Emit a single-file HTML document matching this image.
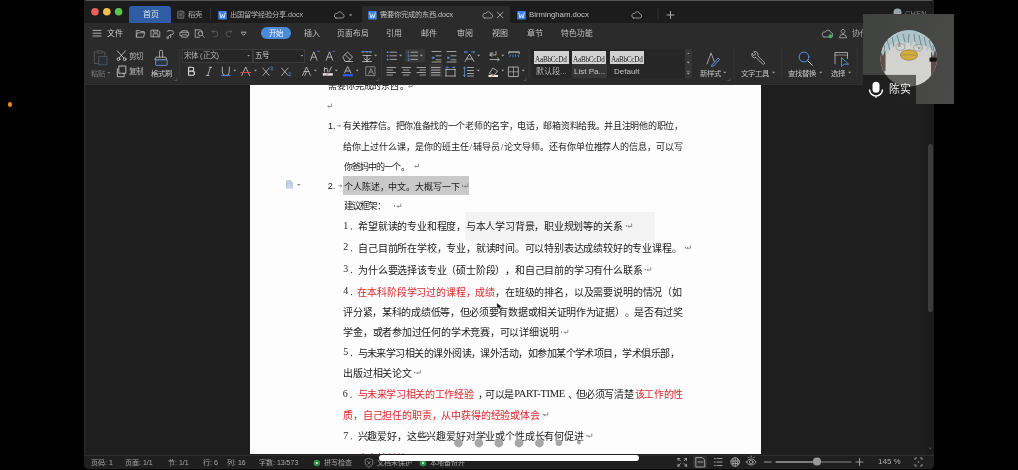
<!DOCTYPE html>
<html lang="zh-CN">
<head>
<meta charset="utf-8">
<style>
*{margin:0;padding:0;box-sizing:border-box}
html,body{width:1018px;height:470px;overflow:hidden;background:#000}
body{position:relative;font-family:"Liberation Sans",sans-serif}
.gs{will-change:transform}
.a{position:absolute}
.tx{position:absolute;white-space:nowrap;font-size:8px;line-height:10px;color:#c2c2c2;will-change:transform}
.ln{position:absolute;left:0;width:1018px}
.ln i{position:absolute;top:0;font-style:normal;font-family:"Liberation Serif",serif;display:block;width:1em;text-align:center}
.num{position:absolute;font-family:"Liberation Sans",sans-serif;font-size:9px;line-height:10px;color:#1a1a1a}
.num2{position:absolute;font-family:"Liberation Serif",serif;font-size:10px;line-height:12px;color:#2a2a2a}
.hl{position:absolute;background:#c9c9c9}
.lat{position:absolute;font-family:"Liberation Serif",serif;font-size:10.5px;line-height:12px;color:#1a1a1a;letter-spacing:-0.3px}
svg{position:absolute;left:0;top:0}
</style>
</head>
<body>
<!-- orange dot -->
<div class="a" style="left:7.8px;top:102.2px;width:4.2px;height:4.4px;border-radius:50%;background:#e38c10"></div>

<!-- window -->
<div class="a" style="left:84px;top:0;width:850px;height:469px;border-radius:3px 3px 5px 5px;background:#1e1e1e;overflow:hidden;box-shadow:inset 1px 0 0 #2e2e2e, inset -1px 0 0 #2e2e2e">
  <div class="a" style="left:0;top:0;width:850px;height:23px;background:#1c1c1c;border-top:1px solid #555"></div>
  <div class="a" style="left:0;top:23px;width:850px;height:61px;background:#2b2b2b"></div>
  <div class="a" style="left:0;top:83.6px;width:850px;height:1.2px;background:#313131"></div>
  <div class="a" style="left:0;top:454.5px;width:850px;height:15px;background:#1f1f1f;border-top:1px solid #2e2e2e"></div>
</div>

<!-- tabs -->
<div class="a" style="left:129px;top:6px;width:42px;height:17px;background:#2f5ca3;border-radius:3px 3px 0 0"></div>
<div class="tx" style="left:142.5px;top:9.5px;color:#dfe6f2">首页</div>
<div class="a" style="left:362px;top:6px;width:148px;height:17px;background:#2b2b2b;border-radius:3px 3px 0 0"></div>
<div class="tx" style="left:188px;top:9.8px;color:#b0b0b0;font-size:7.3px">稻壳</div>
<div class="tx" style="left:230.2px;top:9.8px;color:#b8b8b8;font-size:7.2px">出国留学经验分享.docx</div>
<div class="tx" style="left:379.5px;top:9.8px;color:#c0c0c0;font-size:7.2px">需要你完成的东西.docx</div>
<div class="tx" style="left:529px;top:9.8px;color:#c4c4c4;font-size:7.75px">Birmingham.docx</div>
<div class="tx" style="left:905px;top:8.5px;color:#808080;font-size:7.3px;letter-spacing:0.3px">CHEN</div>

<!-- menu row -->
<div class="tx" style="left:106.5px;top:28.5px;color:#c8c8c8">文件</div>
<div class="a" style="left:261.4px;top:27.4px;width:29.4px;height:11.6px;border-radius:5.8px;background:#4c89d6"></div>
<div class="tx" style="left:268.8px;top:28.6px;color:#f4f7fc;font-size:7.5px">开始</div>
<div class="tx" style="left:304px;top:28.5px">插入</div>
<div class="tx" style="left:337.3px;top:28.5px;font-size:7.7px">页面布局</div>
<div class="tx" style="left:385.5px;top:28.5px">引用</div>
<div class="tx" style="left:420.5px;top:28.5px">邮件</div>
<div class="tx" style="left:456.5px;top:28.5px">审阅</div>
<div class="tx" style="left:492px;top:28.5px">视图</div>
<div class="tx" style="left:527.3px;top:28.5px">章节</div>
<div class="tx" style="left:560.7px;top:28.5px;font-size:7.7px">特色功能</div>
<div class="tx" style="left:851.5px;top:28.5px;color:#a8a8a8">协作</div>

<!-- ribbon text -->
<div class="tx" style="left:90.5px;top:68.5px;color:#7c7c7c;font-size:7.4px">粘贴</div>
<div class="tx" style="left:128.8px;top:52px;color:#b4b4b4;font-size:7.5px">剪切</div>
<div class="tx" style="left:128.8px;top:67px;color:#b4b4b4;font-size:7.5px">复制</div>
<div class="tx" style="left:150.5px;top:68.5px;color:#c4c4c4;font-size:7.4px">格式刷</div>
<div class="a" style="left:182.2px;top:49.3px;width:71px;height:13.3px;border:1px solid #3c3c3c;background:#262626"></div>
<div class="a" style="left:253.3px;top:49.3px;width:52px;height:13.3px;border:1px solid #3c3c3c;background:#262626"></div>
<div class="tx" style="left:183.5px;top:51.2px;color:#b0b0b0;font-size:7.5px">宋体 (正文)</div>
<div class="tx" style="left:255.3px;top:51.2px;color:#d0d0d0;font-size:7.5px">五号</div>
<div class="a" style="left:532px;top:49px;width:153px;height:28.6px;background:#262626"></div>
<div class="a" style="left:684.5px;top:49px;width:7.5px;height:28.6px;background:#363636"></div>
<div class="a" style="left:571.8px;top:64px;width:35.2px;height:13.6px;background:#363636"></div>
<div class="a" style="left:534px;top:50.9px;width:34.8px;height:12.8px;background:#d2d2d2"></div>
<div class="a" style="left:572px;top:50.9px;width:34px;height:12.8px;background:#d2d2d2"></div>
<div class="a" style="left:610px;top:50.9px;width:34px;height:12.8px;background:#d2d2d2"></div>
<div class="tx" style="left:535px;top:54.5px;font-size:7.2px;color:#1a1a1a;letter-spacing:-0.25px;font-family:'Liberation Serif',serif">AaBbCcDd</div>
<div class="tx" style="left:573px;top:54.5px;font-size:7.2px;color:#1a1a1a;letter-spacing:-0.25px;font-family:'Liberation Serif',serif">AaBbCcDd</div>
<div class="tx" style="left:611px;top:54.5px;font-size:7.2px;color:#1a1a1a;letter-spacing:-0.25px;font-family:'Liberation Serif',serif">AaBbCcDd</div>
<div class="tx" style="left:536px;top:66.5px;color:#b4b4b4">默认段...</div>
<div class="tx" style="left:573.5px;top:66.5px;color:#c4c4c4">List Pa...</div>
<div class="tx" style="left:613.5px;top:66.5px;color:#c4c4c4">Default</div>
<div class="tx" style="left:699.5px;top:68.5px;color:#c4c4c4;font-size:7.4px">新样式</div>
<div class="tx" style="left:740.5px;top:68.5px;color:#c4c4c4;font-size:7.4px">文字工具</div>
<div class="tx" style="left:788px;top:68.5px;color:#c4c4c4;font-size:7.4px">查找替换</div>
<div class="tx" style="left:830.8px;top:68.5px;color:#c4c4c4;font-size:7.4px">选择</div>

<!-- page -->
<div class="a" style="left:250px;top:84.8px;width:511px;height:369.7px;background:#fdfdfd;overflow:hidden">
 <div class="a" style="left:215px;top:127.2px;width:190px;height:29px;background:#f3f3f3"></div>
 <div class="a gs" style="left:-250px;top:-84.8px;width:1018px;height:470px">
<div class="ln" style="top:82.00px;font-size:9px;height:9px;line-height:9px"><i style="left:328.30px;width:9.00px;color:#1a1a1a">需</i><i style="left:337.11px;width:9.00px;color:#1a1a1a">要</i><i style="left:345.93px;width:9.00px;color:#1a1a1a">你</i><i style="left:354.74px;width:9.00px;color:#1a1a1a">完</i><i style="left:363.56px;width:9.00px;color:#1a1a1a">成</i><i style="left:372.37px;width:9.00px;color:#1a1a1a">的</i><i style="left:381.19px;width:9.00px;color:#1a1a1a">东</i><i style="left:390.00px;width:9.00px;color:#1a1a1a">西</i></div>
<div class="ln" style="top:82.00px;font-size:9px;height:9px;line-height:9px"><i style="left:400.00px;width:9.00px;color:#1a1a1a">。</i></div>
<div class="num" style="left:327.9px;top:120.5px">1.</div>
<div class="ln" style="top:122.30px;font-size:9px;height:9px;line-height:9px"><i style="left:343.30px;width:9.00px;color:#1a1a1a">有</i><i style="left:352.00px;width:9.00px;color:#1a1a1a">关</i><i style="left:360.71px;width:9.00px;color:#1a1a1a">推</i><i style="left:369.41px;width:9.00px;color:#1a1a1a">荐</i><i style="left:378.11px;width:9.00px;color:#1a1a1a">信</i><i style="left:386.81px;width:9.00px;color:#1a1a1a">。</i><i style="left:395.52px;width:9.00px;color:#1a1a1a">把</i><i style="left:404.22px;width:9.00px;color:#1a1a1a">你</i><i style="left:412.92px;width:9.00px;color:#1a1a1a">准</i><i style="left:421.62px;width:9.00px;color:#1a1a1a">备</i><i style="left:430.33px;width:9.00px;color:#1a1a1a">找</i><i style="left:439.03px;width:9.00px;color:#1a1a1a">的</i><i style="left:447.73px;width:9.00px;color:#1a1a1a">一</i><i style="left:456.43px;width:9.00px;color:#1a1a1a">个</i><i style="left:465.14px;width:9.00px;color:#1a1a1a">老</i><i style="left:473.84px;width:9.00px;color:#1a1a1a">师</i><i style="left:482.54px;width:9.00px;color:#1a1a1a">的</i><i style="left:491.24px;width:9.00px;color:#1a1a1a">名</i><i style="left:499.95px;width:9.00px;color:#1a1a1a">字</i><i style="left:508.65px;width:9.00px;color:#1a1a1a">，</i><i style="left:517.35px;width:9.00px;color:#1a1a1a">电</i><i style="left:526.06px;width:9.00px;color:#1a1a1a">话</i><i style="left:534.76px;width:9.00px;color:#1a1a1a">，</i><i style="left:543.46px;width:9.00px;color:#1a1a1a">邮</i><i style="left:552.16px;width:9.00px;color:#1a1a1a">箱</i><i style="left:560.87px;width:9.00px;color:#1a1a1a">资</i><i style="left:569.57px;width:9.00px;color:#1a1a1a">料</i><i style="left:578.27px;width:9.00px;color:#1a1a1a">给</i><i style="left:586.97px;width:9.00px;color:#1a1a1a">我</i><i style="left:595.68px;width:9.00px;color:#1a1a1a">。</i><i style="left:604.38px;width:9.00px;color:#1a1a1a">并</i><i style="left:613.08px;width:9.00px;color:#1a1a1a">且</i><i style="left:621.78px;width:9.00px;color:#1a1a1a">注</i><i style="left:630.49px;width:9.00px;color:#1a1a1a">明</i><i style="left:639.19px;width:9.00px;color:#1a1a1a">他</i><i style="left:647.89px;width:9.00px;color:#1a1a1a">的</i><i style="left:656.59px;width:9.00px;color:#1a1a1a">职</i><i style="left:665.30px;width:9.00px;color:#1a1a1a">位</i><i style="left:674.00px;width:9.00px;color:#1a1a1a">，</i></div>
<div class="ln" style="top:143.00px;font-size:9px;height:9px;line-height:9px"><i style="left:343.30px;width:9.00px;color:#1a1a1a">给</i><i style="left:352.24px;width:9.00px;color:#1a1a1a">你</i><i style="left:361.18px;width:9.00px;color:#1a1a1a">上</i><i style="left:370.12px;width:9.00px;color:#1a1a1a">过</i><i style="left:379.06px;width:9.00px;color:#1a1a1a">什</i><i style="left:388.00px;width:9.00px;color:#1a1a1a">么</i><i style="left:396.94px;width:9.00px;color:#1a1a1a">课</i><i style="left:405.88px;width:9.00px;color:#1a1a1a">，</i><i style="left:414.82px;width:9.00px;color:#1a1a1a">是</i><i style="left:423.76px;width:9.00px;color:#1a1a1a">你</i><i style="left:432.69px;width:9.00px;color:#1a1a1a">的</i><i style="left:441.63px;width:9.00px;color:#1a1a1a">班</i><i style="left:450.57px;width:9.00px;color:#1a1a1a">主</i><i style="left:459.51px;width:9.00px;color:#1a1a1a">任</i><i style="left:468.45px;width:4.50px;color:#1a1a1a">/</i><i style="left:472.89px;width:9.00px;color:#1a1a1a">辅</i><i style="left:481.83px;width:9.00px;color:#1a1a1a">导</i><i style="left:490.77px;width:9.00px;color:#1a1a1a">员</i><i style="left:499.71px;width:4.50px;color:#1a1a1a">/</i><i style="left:504.15px;width:9.00px;color:#1a1a1a">论</i><i style="left:513.09px;width:9.00px;color:#1a1a1a">文</i><i style="left:522.03px;width:9.00px;color:#1a1a1a">导</i><i style="left:530.97px;width:9.00px;color:#1a1a1a">师</i><i style="left:539.91px;width:9.00px;color:#1a1a1a">。</i><i style="left:548.85px;width:9.00px;color:#1a1a1a">还</i><i style="left:557.79px;width:9.00px;color:#1a1a1a">有</i><i style="left:566.73px;width:9.00px;color:#1a1a1a">你</i><i style="left:575.67px;width:9.00px;color:#1a1a1a">单</i><i style="left:584.61px;width:9.00px;color:#1a1a1a">位</i><i style="left:593.54px;width:9.00px;color:#1a1a1a">推</i><i style="left:602.48px;width:9.00px;color:#1a1a1a">荐</i><i style="left:611.42px;width:9.00px;color:#1a1a1a">人</i><i style="left:620.36px;width:9.00px;color:#1a1a1a">的</i><i style="left:629.30px;width:9.00px;color:#1a1a1a">信</i><i style="left:638.24px;width:9.00px;color:#1a1a1a">息</i><i style="left:647.18px;width:9.00px;color:#1a1a1a">，</i><i style="left:656.12px;width:9.00px;color:#1a1a1a">可</i><i style="left:665.06px;width:9.00px;color:#1a1a1a">以</i><i style="left:674.00px;width:9.00px;color:#1a1a1a">写</i></div>
<div class="ln" style="top:162.50px;font-size:9px;height:9px;line-height:9px"><i style="left:343.60px;width:9.00px;color:#1a1a1a">你</i><i style="left:351.74px;width:9.00px;color:#1a1a1a">爸</i><i style="left:359.89px;width:9.00px;color:#1a1a1a">妈</i><i style="left:368.03px;width:9.00px;color:#1a1a1a">中</i><i style="left:376.17px;width:9.00px;color:#1a1a1a">的</i><i style="left:384.31px;width:9.00px;color:#1a1a1a">一</i><i style="left:392.46px;width:9.00px;color:#1a1a1a">个</i><i style="left:400.60px;width:9.00px;color:#1a1a1a">。</i></div>
<div class="hl" style="left:343.3px;top:175.6px;width:126px;height:19.6px"></div>
<div class="num" style="left:327.8px;top:180.5px">2.</div>
<div class="ln" style="top:182.50px;font-size:9px;height:9px;line-height:9px"><i style="left:344.00px;width:9.00px;color:#1a1a1a">个</i><i style="left:352.89px;width:9.00px;color:#1a1a1a">人</i><i style="left:361.78px;width:9.00px;color:#1a1a1a">陈</i><i style="left:370.67px;width:9.00px;color:#1a1a1a">述</i><i style="left:379.57px;width:9.00px;color:#1a1a1a">，</i><i style="left:388.46px;width:9.00px;color:#1a1a1a">中</i><i style="left:397.35px;width:9.00px;color:#1a1a1a">文</i><i style="left:406.24px;width:9.00px;color:#1a1a1a">。</i><i style="left:415.13px;width:9.00px;color:#1a1a1a">大</i><i style="left:424.02px;width:9.00px;color:#1a1a1a">概</i><i style="left:432.92px;width:9.00px;color:#1a1a1a">写</i><i style="left:441.81px;width:9.00px;color:#1a1a1a">一</i><i style="left:450.70px;width:9.00px;color:#1a1a1a">下</i></div>
<div class="ln" style="top:202.05px;font-size:9.5px;height:9.5px;line-height:9.5px"><i style="left:343.60px;width:9.50px;color:#1a1a1a">建</i><i style="left:351.83px;width:9.50px;color:#1a1a1a">议</i><i style="left:360.05px;width:9.50px;color:#1a1a1a">框</i><i style="left:368.28px;width:9.50px;color:#1a1a1a">架</i><i style="left:376.50px;width:9.50px;color:#1a1a1a">：</i></div>
<div class="num2" style="left:343.2px;top:219.7px">1</div>
<div class="ln" style="top:222.00px;font-size:10px;height:10px;line-height:10px"><i style="left:358.30px;width:10.00px;color:#1a1a1a">希</i><i style="left:368.08px;width:10.00px;color:#1a1a1a">望</i><i style="left:377.86px;width:10.00px;color:#1a1a1a">就</i><i style="left:387.64px;width:10.00px;color:#1a1a1a">读</i><i style="left:397.42px;width:10.00px;color:#1a1a1a">的</i><i style="left:407.20px;width:10.00px;color:#1a1a1a">专</i><i style="left:416.98px;width:10.00px;color:#1a1a1a">业</i><i style="left:426.77px;width:10.00px;color:#1a1a1a">和</i><i style="left:436.55px;width:10.00px;color:#1a1a1a">程</i><i style="left:446.33px;width:10.00px;color:#1a1a1a">度</i><i style="left:456.11px;width:10.00px;color:#1a1a1a">，</i><i style="left:465.89px;width:10.00px;color:#1a1a1a">与</i><i style="left:475.67px;width:10.00px;color:#1a1a1a">本</i><i style="left:485.45px;width:10.00px;color:#1a1a1a">人</i><i style="left:495.23px;width:10.00px;color:#1a1a1a">学</i><i style="left:505.01px;width:10.00px;color:#1a1a1a">习</i><i style="left:514.79px;width:10.00px;color:#1a1a1a">背</i><i style="left:524.57px;width:10.00px;color:#1a1a1a">景</i><i style="left:534.35px;width:10.00px;color:#1a1a1a">，</i><i style="left:544.13px;width:10.00px;color:#1a1a1a">职</i><i style="left:553.92px;width:10.00px;color:#1a1a1a">业</i><i style="left:563.70px;width:10.00px;color:#1a1a1a">规</i><i style="left:573.48px;width:10.00px;color:#1a1a1a">划</i><i style="left:583.26px;width:10.00px;color:#1a1a1a">等</i><i style="left:593.04px;width:10.00px;color:#1a1a1a">的</i><i style="left:602.82px;width:10.00px;color:#1a1a1a">关</i><i style="left:612.60px;width:10.00px;color:#1a1a1a">系</i></div>
<div class="num2" style="left:343.2px;top:241.39999999999998px">2</div>
<div class="ln" style="top:243.70px;font-size:10px;height:10px;line-height:10px"><i style="left:358.30px;width:10.00px;color:#1a1a1a">自</i><i style="left:368.09px;width:10.00px;color:#1a1a1a">己</i><i style="left:377.88px;width:10.00px;color:#1a1a1a">目</i><i style="left:387.66px;width:10.00px;color:#1a1a1a">前</i><i style="left:397.45px;width:10.00px;color:#1a1a1a">所</i><i style="left:407.24px;width:10.00px;color:#1a1a1a">在</i><i style="left:417.03px;width:10.00px;color:#1a1a1a">学</i><i style="left:426.81px;width:10.00px;color:#1a1a1a">校</i><i style="left:436.60px;width:10.00px;color:#1a1a1a">，</i><i style="left:446.39px;width:10.00px;color:#1a1a1a">专</i><i style="left:456.18px;width:10.00px;color:#1a1a1a">业</i><i style="left:465.96px;width:10.00px;color:#1a1a1a">，</i><i style="left:475.75px;width:10.00px;color:#1a1a1a">就</i><i style="left:485.54px;width:10.00px;color:#1a1a1a">读</i><i style="left:495.33px;width:10.00px;color:#1a1a1a">时</i><i style="left:505.11px;width:10.00px;color:#1a1a1a">间</i><i style="left:514.90px;width:10.00px;color:#1a1a1a">。</i><i style="left:524.69px;width:10.00px;color:#1a1a1a">可</i><i style="left:534.48px;width:10.00px;color:#1a1a1a">以</i><i style="left:544.26px;width:10.00px;color:#1a1a1a">特</i><i style="left:554.05px;width:10.00px;color:#1a1a1a">别</i><i style="left:563.84px;width:10.00px;color:#1a1a1a">表</i><i style="left:573.63px;width:10.00px;color:#1a1a1a">达</i><i style="left:583.41px;width:10.00px;color:#1a1a1a">成</i><i style="left:593.20px;width:10.00px;color:#1a1a1a">绩</i><i style="left:602.99px;width:10.00px;color:#1a1a1a">较</i><i style="left:612.78px;width:10.00px;color:#1a1a1a">好</i><i style="left:622.56px;width:10.00px;color:#1a1a1a">的</i><i style="left:632.35px;width:10.00px;color:#1a1a1a">专</i><i style="left:642.14px;width:10.00px;color:#1a1a1a">业</i><i style="left:651.93px;width:10.00px;color:#1a1a1a">课</i><i style="left:661.71px;width:10.00px;color:#1a1a1a">程</i><i style="left:671.50px;width:10.00px;color:#1a1a1a">。</i></div>
<div class="num2" style="left:343.2px;top:263.2px">3</div>
<div class="ln" style="top:265.50px;font-size:10px;height:10px;line-height:10px"><i style="left:358.30px;width:10.00px;color:#1a1a1a">为</i><i style="left:368.09px;width:10.00px;color:#1a1a1a">什</i><i style="left:377.89px;width:10.00px;color:#1a1a1a">么</i><i style="left:387.68px;width:10.00px;color:#1a1a1a">要</i><i style="left:397.47px;width:10.00px;color:#1a1a1a">选</i><i style="left:407.26px;width:10.00px;color:#1a1a1a">择</i><i style="left:417.06px;width:10.00px;color:#1a1a1a">该</i><i style="left:426.85px;width:10.00px;color:#1a1a1a">专</i><i style="left:436.64px;width:10.00px;color:#1a1a1a">业</i><i style="left:446.44px;width:10.00px;color:#1a1a1a">（</i><i style="left:456.23px;width:10.00px;color:#1a1a1a">硕</i><i style="left:466.02px;width:10.00px;color:#1a1a1a">士</i><i style="left:475.81px;width:10.00px;color:#1a1a1a">阶</i><i style="left:485.61px;width:10.00px;color:#1a1a1a">段</i><i style="left:495.40px;width:10.00px;color:#1a1a1a">）</i><i style="left:505.19px;width:10.00px;color:#1a1a1a">，</i><i style="left:514.99px;width:10.00px;color:#1a1a1a">和</i><i style="left:524.78px;width:10.00px;color:#1a1a1a">自</i><i style="left:534.57px;width:10.00px;color:#1a1a1a">己</i><i style="left:544.36px;width:10.00px;color:#1a1a1a">目</i><i style="left:554.16px;width:10.00px;color:#1a1a1a">前</i><i style="left:563.95px;width:10.00px;color:#1a1a1a">的</i><i style="left:573.74px;width:10.00px;color:#1a1a1a">学</i><i style="left:583.54px;width:10.00px;color:#1a1a1a">习</i><i style="left:593.33px;width:10.00px;color:#1a1a1a">有</i><i style="left:603.12px;width:10.00px;color:#1a1a1a">什</i><i style="left:612.91px;width:10.00px;color:#1a1a1a">么</i><i style="left:622.71px;width:10.00px;color:#1a1a1a">联</i><i style="left:632.50px;width:10.00px;color:#1a1a1a">系</i></div>
<div class="num2" style="left:343.2px;top:285.2px">4</div>
<div class="ln" style="top:287.50px;font-size:10px;height:10px;line-height:10px"><i style="left:357.40px;width:10.00px;color:#d9272e">在</i><i style="left:367.23px;width:10.00px;color:#d9272e">本</i><i style="left:377.06px;width:10.00px;color:#d9272e">科</i><i style="left:386.89px;width:10.00px;color:#d9272e">阶</i><i style="left:396.73px;width:10.00px;color:#d9272e">段</i><i style="left:406.56px;width:10.00px;color:#d9272e">学</i><i style="left:416.39px;width:10.00px;color:#d9272e">习</i><i style="left:426.22px;width:10.00px;color:#d9272e">过</i><i style="left:436.05px;width:10.00px;color:#d9272e">的</i><i style="left:445.88px;width:10.00px;color:#d9272e">课</i><i style="left:455.71px;width:10.00px;color:#d9272e">程</i><i style="left:465.54px;width:10.00px;color:#d9272e">，</i><i style="left:475.38px;width:10.00px;color:#d9272e">成</i><i style="left:485.21px;width:10.00px;color:#d9272e">绩</i><i style="left:495.04px;width:10.00px;color:#1a1a1a">，</i><i style="left:504.87px;width:10.00px;color:#1a1a1a">在</i><i style="left:514.70px;width:10.00px;color:#1a1a1a">班</i><i style="left:524.53px;width:10.00px;color:#1a1a1a">级</i><i style="left:534.36px;width:10.00px;color:#1a1a1a">的</i><i style="left:544.19px;width:10.00px;color:#1a1a1a">排</i><i style="left:554.02px;width:10.00px;color:#1a1a1a">名</i><i style="left:563.86px;width:10.00px;color:#1a1a1a">，</i><i style="left:573.69px;width:10.00px;color:#1a1a1a">以</i><i style="left:583.52px;width:10.00px;color:#1a1a1a">及</i><i style="left:593.35px;width:10.00px;color:#1a1a1a">需</i><i style="left:603.18px;width:10.00px;color:#1a1a1a">要</i><i style="left:613.01px;width:10.00px;color:#1a1a1a">说</i><i style="left:622.84px;width:10.00px;color:#1a1a1a">明</i><i style="left:632.67px;width:10.00px;color:#1a1a1a">的</i><i style="left:642.51px;width:10.00px;color:#1a1a1a">情</i><i style="left:652.34px;width:10.00px;color:#1a1a1a">况</i><i style="left:662.17px;width:10.00px;color:#1a1a1a">（</i><i style="left:672.00px;width:10.00px;color:#1a1a1a">如</i></div>
<div class="ln" style="top:308.00px;font-size:10px;height:10px;line-height:10px"><i style="left:343.20px;width:10.00px;color:#1a1a1a">评</i><i style="left:352.90px;width:10.00px;color:#1a1a1a">分</i><i style="left:362.60px;width:10.00px;color:#1a1a1a">紧</i><i style="left:372.30px;width:10.00px;color:#1a1a1a">，</i><i style="left:382.00px;width:10.00px;color:#1a1a1a">某</i><i style="left:391.70px;width:10.00px;color:#1a1a1a">科</i><i style="left:401.40px;width:10.00px;color:#1a1a1a">的</i><i style="left:411.10px;width:10.00px;color:#1a1a1a">成</i><i style="left:420.80px;width:10.00px;color:#1a1a1a">绩</i><i style="left:430.50px;width:10.00px;color:#1a1a1a">低</i><i style="left:440.20px;width:10.00px;color:#1a1a1a">等</i><i style="left:449.90px;width:10.00px;color:#1a1a1a">，</i><i style="left:459.60px;width:10.00px;color:#1a1a1a">但</i><i style="left:469.30px;width:10.00px;color:#1a1a1a">必</i><i style="left:479.00px;width:10.00px;color:#1a1a1a">须</i><i style="left:488.70px;width:10.00px;color:#1a1a1a">要</i><i style="left:498.40px;width:10.00px;color:#1a1a1a">有</i><i style="left:508.10px;width:10.00px;color:#1a1a1a">数</i><i style="left:517.80px;width:10.00px;color:#1a1a1a">据</i><i style="left:527.50px;width:10.00px;color:#1a1a1a">或</i><i style="left:537.20px;width:10.00px;color:#1a1a1a">相</i><i style="left:546.90px;width:10.00px;color:#1a1a1a">关</i><i style="left:556.60px;width:10.00px;color:#1a1a1a">证</i><i style="left:566.30px;width:10.00px;color:#1a1a1a">明</i><i style="left:576.00px;width:10.00px;color:#1a1a1a">作</i><i style="left:585.70px;width:10.00px;color:#1a1a1a">为</i><i style="left:595.40px;width:10.00px;color:#1a1a1a">证</i><i style="left:605.10px;width:10.00px;color:#1a1a1a">据</i><i style="left:614.80px;width:10.00px;color:#1a1a1a">）</i><i style="left:624.50px;width:10.00px;color:#1a1a1a">。</i><i style="left:634.20px;width:10.00px;color:#1a1a1a">是</i><i style="left:643.90px;width:10.00px;color:#1a1a1a">否</i><i style="left:653.60px;width:10.00px;color:#1a1a1a">有</i><i style="left:663.30px;width:10.00px;color:#1a1a1a">过</i><i style="left:673.00px;width:10.00px;color:#1a1a1a">奖</i></div>
<div class="ln" style="top:328.00px;font-size:10px;height:10px;line-height:10px"><i style="left:343.20px;width:10.00px;color:#1a1a1a">学</i><i style="left:352.98px;width:10.00px;color:#1a1a1a">金</i><i style="left:362.76px;width:10.00px;color:#1a1a1a">，</i><i style="left:372.54px;width:10.00px;color:#1a1a1a">或</i><i style="left:382.32px;width:10.00px;color:#1a1a1a">者</i><i style="left:392.10px;width:10.00px;color:#1a1a1a">参</i><i style="left:401.89px;width:10.00px;color:#1a1a1a">加</i><i style="left:411.67px;width:10.00px;color:#1a1a1a">过</i><i style="left:421.45px;width:10.00px;color:#1a1a1a">任</i><i style="left:431.23px;width:10.00px;color:#1a1a1a">何</i><i style="left:441.01px;width:10.00px;color:#1a1a1a">的</i><i style="left:450.79px;width:10.00px;color:#1a1a1a">学</i><i style="left:460.57px;width:10.00px;color:#1a1a1a">术</i><i style="left:470.35px;width:10.00px;color:#1a1a1a">竞</i><i style="left:480.13px;width:10.00px;color:#1a1a1a">赛</i><i style="left:489.91px;width:10.00px;color:#1a1a1a">，</i><i style="left:499.70px;width:10.00px;color:#1a1a1a">可</i><i style="left:509.48px;width:10.00px;color:#1a1a1a">以</i><i style="left:519.26px;width:10.00px;color:#1a1a1a">详</i><i style="left:529.04px;width:10.00px;color:#1a1a1a">细</i><i style="left:538.82px;width:10.00px;color:#1a1a1a">说</i><i style="left:548.60px;width:10.00px;color:#1a1a1a">明</i></div>
<div class="num2" style="left:343.2px;top:346.2px">5</div>
<div class="ln" style="top:348.50px;font-size:10px;height:10px;line-height:10px"><i style="left:357.50px;width:10.00px;color:#1a1a1a">与</i><i style="left:366.95px;width:10.00px;color:#1a1a1a">未</i><i style="left:376.41px;width:10.00px;color:#1a1a1a">来</i><i style="left:385.86px;width:10.00px;color:#1a1a1a">学</i><i style="left:395.32px;width:10.00px;color:#1a1a1a">习</i><i style="left:404.77px;width:10.00px;color:#1a1a1a">相</i><i style="left:414.23px;width:10.00px;color:#1a1a1a">关</i><i style="left:423.68px;width:10.00px;color:#1a1a1a">的</i><i style="left:433.14px;width:10.00px;color:#1a1a1a">课</i><i style="left:442.59px;width:10.00px;color:#1a1a1a">外</i><i style="left:452.05px;width:10.00px;color:#1a1a1a">阅</i><i style="left:461.50px;width:10.00px;color:#1a1a1a">读</i><i style="left:470.95px;width:10.00px;color:#1a1a1a">，</i><i style="left:480.41px;width:10.00px;color:#1a1a1a">课</i><i style="left:489.86px;width:10.00px;color:#1a1a1a">外</i><i style="left:499.32px;width:10.00px;color:#1a1a1a">活</i><i style="left:508.77px;width:10.00px;color:#1a1a1a">动</i><i style="left:518.23px;width:10.00px;color:#1a1a1a">，</i><i style="left:527.68px;width:10.00px;color:#1a1a1a">如</i><i style="left:537.14px;width:10.00px;color:#1a1a1a">参</i><i style="left:546.59px;width:10.00px;color:#1a1a1a">加</i><i style="left:556.05px;width:10.00px;color:#1a1a1a">某</i><i style="left:565.50px;width:10.00px;color:#1a1a1a">个</i><i style="left:574.95px;width:10.00px;color:#1a1a1a">学</i><i style="left:584.41px;width:10.00px;color:#1a1a1a">术</i><i style="left:593.86px;width:10.00px;color:#1a1a1a">项</i><i style="left:603.32px;width:10.00px;color:#1a1a1a">目</i><i style="left:612.77px;width:10.00px;color:#1a1a1a">，</i><i style="left:622.23px;width:10.00px;color:#1a1a1a">学</i><i style="left:631.68px;width:10.00px;color:#1a1a1a">术</i><i style="left:641.14px;width:10.00px;color:#1a1a1a">俱</i><i style="left:650.59px;width:10.00px;color:#1a1a1a">乐</i><i style="left:660.05px;width:10.00px;color:#1a1a1a">部</i><i style="left:669.50px;width:10.00px;color:#1a1a1a">，</i></div>
<div class="ln" style="top:368.50px;font-size:10px;height:10px;line-height:10px"><i style="left:343.20px;width:10.00px;color:#1a1a1a">出</i><i style="left:353.00px;width:10.00px;color:#1a1a1a">版</i><i style="left:362.80px;width:10.00px;color:#1a1a1a">过</i><i style="left:372.60px;width:10.00px;color:#1a1a1a">相</i><i style="left:382.40px;width:10.00px;color:#1a1a1a">关</i><i style="left:392.20px;width:10.00px;color:#1a1a1a">论</i><i style="left:402.00px;width:10.00px;color:#1a1a1a">文</i></div>
<div class="num2" style="left:342.8px;top:387.9px">6</div>
<div class="ln" style="top:390.20px;font-size:10px;height:10px;line-height:10px"><i style="left:357.50px;width:10.00px;color:#d9272e">与</i><i style="left:367.16px;width:10.00px;color:#d9272e">未</i><i style="left:376.83px;width:10.00px;color:#d9272e">来</i><i style="left:386.49px;width:10.00px;color:#d9272e">学</i><i style="left:396.15px;width:10.00px;color:#d9272e">习</i><i style="left:405.82px;width:10.00px;color:#d9272e">相</i><i style="left:415.48px;width:10.00px;color:#d9272e">关</i><i style="left:425.15px;width:10.00px;color:#d9272e">的</i><i style="left:434.81px;width:10.00px;color:#d9272e">工</i><i style="left:444.47px;width:10.00px;color:#d9272e">作</i><i style="left:454.14px;width:10.00px;color:#d9272e">经</i><i style="left:463.80px;width:10.00px;color:#d9272e">验</i></div>
<div class="ln" style="top:390.20px;font-size:10px;height:10px;line-height:10px"><i style="left:477.80px;width:10.00px;color:#1a1a1a">，</i></div>
<div class="ln" style="top:390.20px;font-size:10px;height:10px;line-height:10px"><i style="left:485.30px;width:10.00px;color:#1a1a1a">可</i><i style="left:494.80px;width:10.00px;color:#1a1a1a">以</i><i style="left:504.30px;width:10.00px;color:#1a1a1a">是</i></div>
<div class="lat" style="left:514.2px;top:388.2px">PART-TIME</div>
<div class="ln" style="top:390.20px;font-size:10px;height:10px;line-height:10px"><i style="left:567.80px;width:10.00px;color:#1a1a1a">、</i></div>
<div class="ln" style="top:390.20px;font-size:10px;height:10px;line-height:10px"><i style="left:575.60px;width:10.00px;color:#1a1a1a">但</i><i style="left:585.18px;width:10.00px;color:#1a1a1a">必</i><i style="left:594.76px;width:10.00px;color:#1a1a1a">须</i><i style="left:604.34px;width:10.00px;color:#1a1a1a">写</i><i style="left:613.92px;width:10.00px;color:#1a1a1a">清</i><i style="left:623.50px;width:10.00px;color:#1a1a1a">楚</i></div>
<div class="ln" style="top:390.20px;font-size:10px;height:10px;line-height:10px"><i style="left:634.50px;width:10.00px;color:#d9272e">该</i><i style="left:644.17px;width:10.00px;color:#d9272e">工</i><i style="left:653.85px;width:10.00px;color:#d9272e">作</i><i style="left:663.52px;width:10.00px;color:#d9272e">的</i><i style="left:673.20px;width:10.00px;color:#d9272e">性</i></div>
<div class="ln" style="top:410.50px;font-size:10px;height:10px;line-height:10px"><i style="left:343.20px;width:10.00px;color:#d9272e">质</i><i style="left:353.02px;width:10.00px;color:#d9272e">，</i><i style="left:362.84px;width:10.00px;color:#d9272e">自</i><i style="left:372.66px;width:10.00px;color:#d9272e">己</i><i style="left:382.48px;width:10.00px;color:#d9272e">担</i><i style="left:392.31px;width:10.00px;color:#d9272e">任</i><i style="left:402.13px;width:10.00px;color:#d9272e">的</i><i style="left:411.95px;width:10.00px;color:#d9272e">职</i><i style="left:421.77px;width:10.00px;color:#d9272e">责</i><i style="left:431.59px;width:10.00px;color:#d9272e">，</i><i style="left:441.41px;width:10.00px;color:#d9272e">从</i><i style="left:451.23px;width:10.00px;color:#d9272e">中</i><i style="left:461.05px;width:10.00px;color:#d9272e">获</i><i style="left:470.87px;width:10.00px;color:#d9272e">得</i><i style="left:480.69px;width:10.00px;color:#d9272e">的</i><i style="left:490.52px;width:10.00px;color:#d9272e">经</i><i style="left:500.34px;width:10.00px;color:#d9272e">验</i><i style="left:510.16px;width:10.00px;color:#d9272e">或</i><i style="left:519.98px;width:10.00px;color:#d9272e">体</i><i style="left:529.80px;width:10.00px;color:#d9272e">会</i></div>
<div class="num2" style="left:343.2px;top:429.5px">7</div>
<div class="ln" style="top:431.80px;font-size:10px;height:10px;line-height:10px"><i style="left:357.50px;width:10.00px;color:#1a1a1a">兴</i><i style="left:367.34px;width:10.00px;color:#1a1a1a">趣</i><i style="left:377.17px;width:10.00px;color:#1a1a1a">爱</i><i style="left:387.01px;width:10.00px;color:#1a1a1a">好</i><i style="left:396.85px;width:10.00px;color:#1a1a1a">，</i><i style="left:406.68px;width:10.00px;color:#1a1a1a">这</i><i style="left:416.52px;width:10.00px;color:#1a1a1a">些</i><i style="left:426.35px;width:10.00px;color:#1a1a1a">兴</i><i style="left:436.19px;width:10.00px;color:#1a1a1a">趣</i><i style="left:446.03px;width:10.00px;color:#1a1a1a">爱</i><i style="left:455.86px;width:10.00px;color:#1a1a1a">好</i><i style="left:465.70px;width:10.00px;color:#1a1a1a">对</i><i style="left:475.54px;width:10.00px;color:#1a1a1a">学</i><i style="left:485.37px;width:10.00px;color:#1a1a1a">业</i><i style="left:495.21px;width:10.00px;color:#1a1a1a">或</i><i style="left:505.05px;width:10.00px;color:#1a1a1a">个</i><i style="left:514.88px;width:10.00px;color:#1a1a1a">性</i><i style="left:524.72px;width:10.00px;color:#1a1a1a">成</i><i style="left:534.55px;width:10.00px;color:#1a1a1a">长</i><i style="left:544.39px;width:10.00px;color:#1a1a1a">有</i><i style="left:554.23px;width:10.00px;color:#1a1a1a">何</i><i style="left:564.06px;width:10.00px;color:#1a1a1a">促</i><i style="left:573.90px;width:10.00px;color:#1a1a1a">进</i></div>
<div class="ln" style="top:453.60px;font-size:10px;height:10px;line-height:10px"><i style="left:357.50px;width:10.00px;color:#d9272e">个</i><i style="left:367.38px;width:10.00px;color:#d9272e">人</i><i style="left:377.25px;width:10.00px;color:#d9272e">特</i><i style="left:387.12px;width:10.00px;color:#d9272e">长</i><i style="left:397.00px;width:10.00px;color:#d9272e">等</i></div><svg width="1018" height="470" viewBox="0 0 1018 470"><path d="M412.20 83.60 v2.9 h-3.4 M409.70 85.30 l-1.1 1.2 l1.1 1.2" stroke="#6a6a6a" stroke-width="0.7" fill="none"/><path d="M331.50 103.60 v2.9 h-3.4 M329.00 105.30 l-1.1 1.2 l1.1 1.2" stroke="#6a6a6a" stroke-width="0.7" fill="none"/><path d="M418.50 163.60 v2.9 h-3.4 M416.00 165.30 l-1.1 1.2 l1.1 1.2" stroke="#6a6a6a" stroke-width="0.7" fill="none"/><circle cx="462.50" cy="186.00" r="0.7" fill="#666"/><path d="M467.80 183.60 v2.9 h-3.4 M465.30 185.30 l-1.1 1.2 l1.1 1.2" stroke="#6a6a6a" stroke-width="0.7" fill="none"/><circle cx="394.50" cy="206.00" r="0.7" fill="#666"/><path d="M400.80 203.60 v2.9 h-3.4 M398.30 205.30 l-1.1 1.2 l1.1 1.2" stroke="#6a6a6a" stroke-width="0.7" fill="none"/><path d="M337 125.8 h3.6 M339.3 124.7 l1.3 1.1 l-1.3 1.1 M338.2 185.8 h3.6 M340.5 184.7 l1.3 1.1 l-1.3 1.1" stroke="#777" stroke-width="0.7" fill="none"/><circle cx="351.50" cy="229.00" r="0.65" fill="#444"/><circle cx="626.50" cy="226.00" r="0.7" fill="#666"/><path d="M631.60 223.60 v2.9 h-3.4 M629.10 225.30 l-1.1 1.2 l1.1 1.2" stroke="#6a6a6a" stroke-width="0.7" fill="none"/><circle cx="351.50" cy="250.70" r="0.65" fill="#444"/><circle cx="685.50" cy="247.70" r="0.7" fill="#666"/><path d="M690.50 245.30 v2.9 h-3.4 M688.00 247.00 l-1.1 1.2 l1.1 1.2" stroke="#6a6a6a" stroke-width="0.7" fill="none"/><circle cx="351.50" cy="272.50" r="0.65" fill="#444"/><circle cx="645.20" cy="269.50" r="0.7" fill="#666"/><path d="M650.80 267.10 v2.9 h-3.4 M648.30 268.80 l-1.1 1.2 l1.1 1.2" stroke="#6a6a6a" stroke-width="0.7" fill="none"/><circle cx="351.50" cy="294.50" r="0.65" fill="#444"/><circle cx="561.50" cy="332.00" r="0.7" fill="#666"/><path d="M567.80 329.60 v2.9 h-3.4 M565.30 331.30 l-1.1 1.2 l1.1 1.2" stroke="#6a6a6a" stroke-width="0.7" fill="none"/><circle cx="351.50" cy="355.50" r="0.65" fill="#444"/><circle cx="414.80" cy="372.50" r="0.7" fill="#666"/><path d="M420.30 370.10 v2.9 h-3.4 M417.80 371.80 l-1.1 1.2 l1.1 1.2" stroke="#6a6a6a" stroke-width="0.7" fill="none"/><circle cx="351.10" cy="397.20" r="0.65" fill="#444"/><circle cx="543.20" cy="414.50" r="0.7" fill="#666"/><path d="M547.80 412.10 v2.9 h-3.4 M545.30 413.80 l-1.1 1.2 l1.1 1.2" stroke="#6a6a6a" stroke-width="0.7" fill="none"/><circle cx="351.50" cy="438.80" r="0.65" fill="#444"/><circle cx="587.00" cy="435.80" r="0.7" fill="#666"/><path d="M591.80 433.40 v2.9 h-3.4 M589.30 435.10 l-1.1 1.2 l1.1 1.2" stroke="#6a6a6a" stroke-width="0.7" fill="none"/></svg>
 </div>
</div>
<!-- doc side icon -->
<svg width="1018" height="470" viewBox="0 0 1018 470">
 <path d="M286 180.3 h4.6 l2.3 2.3 v6 h-6.9 z" fill="#b9c9e6" stroke="none"/><path d="M287.3 182 h1.5 M288 184.8 h2.5 M287.3 187 h4.2" stroke="#e6eefa" stroke-width="0.8"/>
 <path d="M297 184 l1.8 2 l1.8 -2 z" fill="#888"/>
</svg>

<!-- status bar -->
<div class="tx" style="left:91px;top:458.3px;font-size:7px;color:#a8a8a8">页码: 1</div>
<div class="tx" style="left:125px;top:458.3px;font-size:7px;color:#a8a8a8">页面: 1/1</div>
<div class="tx" style="left:168px;top:458.3px;font-size:7px;color:#a8a8a8">节: 1/1</div>
<div class="tx" style="left:203px;top:458.3px;font-size:7px;color:#a8a8a8">行: 6</div>
<div class="tx" style="left:227px;top:458.3px;font-size:7px;color:#a8a8a8">列: 16</div>
<div class="tx" style="left:259px;top:458.3px;font-size:7px;color:#a8a8a8">字数: 13/573</div>
<div class="tx" style="left:324px;top:458.3px;font-size:7px;color:#a8a8a8">拼写检查</div>
<div class="tx" style="left:377px;top:458.3px;font-size:7px;color:#a8a8a8">文档未保护</div>
<div class="tx" style="left:430px;top:458.3px;font-size:7px;color:#a8a8a8">本地备份开</div>
<div class="tx" style="left:878px;top:457px;font-size:8px;color:#b0b0b0">145 %</div>
<div class="a" style="left:692.7px;top:455px;width:14.3px;height:13px;background:#2e2e2e"></div>

<!-- scrollbar -->
<div class="a" style="left:926px;top:84px;width:8px;height:370px;background:#1b1b1b"></div>
<div class="a" style="left:927.5px;top:144px;width:5.5px;height:168px;background:#3c3c3c;border-radius:3px"></div>

<svg width="1018" height="470" viewBox="0 0 1018 470">
<g fill="none" stroke-linecap="round" stroke-linejoin="round">
 <!-- traffic lights -->
 <circle cx="95" cy="11.7" r="3.8" fill="#ec6259" stroke="none"/>
 <circle cx="106.8" cy="11.7" r="3.8" fill="#f4bf4f" stroke="none"/>
 <circle cx="118.6" cy="11.7" r="3.8" fill="#5cc34f" stroke="none"/>
 <!-- docer icon -->
 <rect x="177" y="10.5" width="7.5" height="8.5" rx="2" fill="#5a5a5a" stroke="none"/>
 <path d="M179.3 12.5 h1.5 a2.2 2.2 0 0 1 0 4.5 h-1.5 z" fill="none" stroke="#1b1b1b" stroke-width="0.7"/>
 <line x1="210.5" y1="8" x2="210.5" y2="19" stroke="#3a3a3a" stroke-width="0.8"/>
 <!-- W icons -->
 <g id="w1"><rect x="218.2" y="11" width="8.6" height="8.6" rx="0.8" fill="#3f7ee0" stroke="none"/>
 <path d="M219.8 13 l1.3 5 l1.4 -3.5 l1.4 3.5 l1.3 -5" stroke="#fff" stroke-width="0.8"/></g>
 <use href="#w1" x="150" y="0"/>
 <use href="#w1" x="299" y="0"/>
 <!-- clouds -->
 <g id="cl"><path d="M336 18 h6 a2 2 0 0 0 0.3 -4 a2.6 2.6 0 0 0 -5 -0.6 a1.9 1.9 0 0 0 -1.3 4.6 z" stroke="#a8a8a8" stroke-width="0.8"/></g>
 <use href="#cl" x="148.5" y="0"/>
 <use href="#cl" x="297.5" y="0"/>
 <circle cx="350.7" cy="15" r="1.2" fill="#777" stroke="none"/>
 <path d="M497.3 12.2 l5.6 5.6 M502.9 12.2 l-5.6 5.6" stroke="#c0c0c0" stroke-width="0.8"/>
 <line x1="658" y1="8.5" x2="658" y2="19.5" stroke="#3a3a3a" stroke-width="0.8"/>
 <path d="M670.5 11.5 v7 M667 15 h7" stroke="#bbb" stroke-width="0.9"/>
 <circle cx="897.5" cy="12.5" r="4" fill="#9aa3a6" stroke="none"/><path d="M894.5 14.5 q3 -1.5 6 0 v2 h-6 z" fill="#c9a94a" stroke="none"/>

 <!-- menu row icons -->
 <path d="M93 30.4 h8 M93 33.2 h8 M93 36 h8" stroke="#bcbcbc" stroke-width="0.9"/>
 <g stroke="#b8b8b8" stroke-width="0.8">
  <path d="M136.3 36.8 v-6.3 h3.3 l1 1 h3.6 v1.4 M136.3 36.8 l1.2 -4 h7.3 l-1.2 4 z"/>
  <path d="M151.3 30.2 h6.7 l1.8 1.8 v4.8 h-8.5 z M153.2 36.8 v-3 h4.8 v3 M153.6 30.2 v2 h3.6 v-2"/>
  <path d="M168.6 30.6 h3 a2 2 0 0 1 0 4 h-1 v2.8 M168.8 30.6 l-1.6 0.8 M170.6 34.6 l-2.7 2.2 a1 1 0 1 0 0.8 0.8"/>
  <path d="M181.7 32.3 v-1.5 h5.6 v1.5 M180.3 32.3 h8.4 v3.3 h-1.4 v1.6 h-5.6 v-1.6 h-1.4 z M182.2 34.8 h4.6"/>
  <path d="M195.2 29.9 h5.5 l1.6 1.6 v1.6 M195.2 29.9 v7.3 h4.2 M200.4 33.6 m-2.2 0 a2.2 2.2 0 1 0 4.4 0 a2.2 2.2 0 1 0 -4.4 0 M202.2 35.3 l2 2"/>
 </g>
 <g stroke="#5a5a5a" stroke-width="0.9">
  <path d="M212 31.5 l1.3 -1.3 M212 31.5 l1.4 1.1 M212.2 31.5 h3 a2.6 2.6 0 0 1 0 5.2 h-1.5"/>
  <path d="M231.8 31.5 l-1.3 -1.3 M231.8 31.5 l-1.4 1.1 M231.6 31.5 h-3 a2.6 2.6 0 0 0 0 5.2 h1.5"/>
 </g>
 <path d="M241.5 32.2 h4.5 M242 33.6 l1.7 1.7 l1.7 -1.7" stroke="#bdbdbd" stroke-width="0.9"/>

 <!-- collab -->
 <path d="M824 37 h6.5 a2.2 2.2 0 0 0 0.3 -4.4 a2.8 2.8 0 0 0 -5.4 -0.6 a2 2 0 0 0 -1.4 5 z" stroke="#b0b0b0" stroke-width="0.8"/>
 <circle cx="830.5" cy="36.2" r="2" fill="#3cb55a" stroke="none"/>
 <path d="M843 29.5 a2 2 0 1 0 0.01 0 z M839.5 37.5 a3.5 3.2 0 0 1 7 0 M840 37.8 h6.5" stroke="#b0b0b0" stroke-width="0.8"/>

 <!-- ribbon: paste -->
 <g stroke="#5a5a5a" stroke-width="0.8">
  <path d="M94.3 52 h2.6 M102.2 52 h2.6 v4 M94.3 52 v11.5 h4.6"/>
  <rect x="97.2" y="50.8" width="5" height="2.2" rx="0.7"/>
 </g>
 <rect x="99.2" y="56.4" width="7.8" height="8.4" stroke="#4f5d70" stroke-width="0.8" fill="#2a2d31"/>
 <path d="M107.2 72 l1.6 1.8 l1.6 -1.8 z" fill="#777" stroke="none"/>
 <!-- scissors -->
 <g stroke="#c4c4c4" stroke-width="0.9">
  <path d="M117.3 50.8 l6.5 7.2 M125.5 50.8 l-6.5 7.2"/>
  <circle cx="118.5" cy="59.2" r="1.4"/><circle cx="124.7" cy="59.2" r="1.4"/>
  <path d="M117.3 68.8 v7.9 h6.8 v-3.3 M119.2 66 h6.6 v7.3 h-6.6 z"/>
 </g>
 <!-- format painter -->
 <path d="M159.4 57.2 v-5.5 a1.6 1.6 0 0 1 3.2 0 v5.5 M156.2 57.2 h9.6 l1 2.6 h-11.6 z" stroke="#c0c0c0" stroke-width="0.8"/>
 <rect x="155.6" y="59.8" width="11.6" height="5.6" rx="0.6" stroke="#6f94cc" stroke-width="0.9" fill="#2c3542"/>
 <path d="M174.5 80.5 h2.5 v-2.5" stroke="#666" stroke-width="0.6"/>
 <line x1="179.4" y1="49.3" x2="179.4" y2="77.6" stroke="#3a3a3a" stroke-width="0.8"/>
 <!-- font dropdowns -->
 <path d="M247.2 55 l1.4 1.4 l1.4 -1.4 z M300.5 55 l1.4 1.4 l1.4 -1.4 z" fill="#a0a0a0" stroke="none"/>
 <!-- B I U A -->
 <path d="M188.6 67.3 h3.3 a1.9 1.9 0 0 1 0 3.8 h-3.3 z M188.6 71.1 h3.8 a2.1 2.1 0 0 1 0 4.2 h-3.8 z" stroke="#dcdcdc" stroke-width="1.1"/>
 <path d="M210.5 67.3 l-2.8 8.2 M209.2 67.3 h2.4 M206.5 75.5 h2.4" stroke="#c8c8c8" stroke-width="0.8"/>
 <path d="M222.3 67 v5 a3.5 3.5 0 0 0 7 0 v-5" stroke="#c8c8c8" stroke-width="0.8"/>
 <line x1="221.5" y1="75.6" x2="230" y2="75.6" stroke="#4f87d6" stroke-width="1"/>
 <path d="M233.2 69.8 l1.6 1.8 l1.6 -1.8 z M253.9 69.8 l1.6 1.8 l1.6 -1.8 z" fill="#a0a0a0" stroke="none"/>
 <path d="M241.8 75.5 l3.9 -8.5 l3.9 8.5" stroke="#c8c8c8" stroke-width="0.8"/>
 <line x1="241" y1="72.5" x2="250.5" y2="72.5" stroke="#d94a44" stroke-width="1"/>
 <!-- X2 -->
 <path d="M262.8 68 l6.5 7.5 M269.3 68 l-6.5 7.5" stroke="#c8c8c8" stroke-width="0.8"/>
 <path d="M270.7 67.5 a1 1 0 0 1 2 0.3 l-2 2 h2.2" stroke="#4f87d6" stroke-width="0.7"/>
 <path d="M281.6 68 l6.5 7.5 M288.1 68 l-6.5 7.5" stroke="#c8c8c8" stroke-width="0.8"/>
 <path d="M288.7 73.2 a1 1 0 0 1 2 0.3 l-2 2 h2.2" stroke="#4f87d6" stroke-width="0.7"/>
 <!-- A+ A- -->
 <path d="M310.5 60.3 l3.3 -8.5 l3.3 8.5 M311.7 57.2 h4.2" stroke="#c8c8c8" stroke-width="0.8"/>
 <path d="M317.5 51.3 h2.2" stroke="#4f87d6" stroke-width="0.7"/>
 <path d="M326.2 60.3 l3.3 -8.5 l3.3 8.5 M327.4 57.2 h4.2" stroke="#c8c8c8" stroke-width="0.8"/>
 <path d="M332.5 51.3 h2.2" stroke="#4f87d6" stroke-width="0.7"/>
 <!-- eraser -->
 <path d="M343 56.5 l4.5 -4.5 l5 5 l-4.5 4.5 h-2.5 z M345 54.5 l5 5 M346.5 61.5 h6" stroke="#c8c8c8" stroke-width="0.8"/>
 <!-- pinyin -->
 <path d="M362 52 h2 M366 52 h2 M369.5 52 h2 M363 55.5 h8 M367 55.5 v6.5 M364 58.5 l3 2 l3 -2 M362.5 61.5 h9" stroke="#c8c8c8" stroke-width="0.8"/>
 <path d="M362 51.5 h9.5" stroke="#4f87d6" stroke-width="0.8" stroke-dasharray="1.5 1"/>
 <path d="M374.0 54.8 l1.6 1.8 l1.6 -1.8 z" fill="#a0a0a0" stroke="none"/>
 <!-- row2: outline A, highlighter, font color, char border -->
 <path d="M302.5 75.5 l4 -8.5 l4 8.5 M304 71.5 h5 M304.8 75.5 l1.8 -4" stroke="#c8c8c8" stroke-width="0.8"/>
 <path d="M313.9 69.8 l1.6 1.8 l1.6 -1.8 z M334.7 69.8 l1.6 1.8 l1.6 -1.8 z M355.7 69.8 l1.6 1.8 l1.6 -1.8 z" fill="#a0a0a0" stroke="none"/>
 <path d="M324.5 67.5 v4.5 M324.5 69.8 a1.6 1.6 0 0 1 3.2 0 v2.2 M331.5 67 l-2.5 5" stroke="#c8c8c8" stroke-width="0.8"/>
 <rect x="322.8" y="73.2" width="10" height="2.4" fill="#e8e8e8" stroke="none"/>
 <path d="M325.5 75.6 l3 -2.4" stroke="#d94a44" stroke-width="0.8"/>
 <path d="M344.5 73 l3.2 -6.5 l3.2 6.5 M345.7 71 h4" stroke="#c8c8c8" stroke-width="0.8"/>
 <rect x="342.8" y="74.2" width="10" height="2.2" fill="#2f5ef5" stroke="none"/>
 <rect x="366.2" y="66.8" width="8.8" height="8.8" stroke="#9a9a9a" stroke-width="0.8"/>
 <path d="M368.5 74 l2.5 -5.5 l2.5 5.5 M369.5 72 h3" stroke="#aaa" stroke-width="0.7"/>
 <path d="M376.5 80.5 h2.2 v-2.2" stroke="#666" stroke-width="0.6"/>
 <line x1="381.6" y1="49.3" x2="381.6" y2="77.6" stroke="#3a3a3a" stroke-width="0.8"/>
 <!-- bullets/numbering -->
 <rect x="405" y="49" width="20" height="13.5" rx="2" fill="#383838" stroke="none"/>
 <g stroke="#c0c0c0" stroke-width="0.8">
  <path d="M390 52.2 h6.5 M390 55.8 h6.5 M390 59.4 h6.5"/>
  <path d="M411 52.2 h6.5 M411 55.8 h6.5 M411 59.4 h6.5"/>
 </g>
 <g fill="#5b93e0" stroke="none">
  <circle cx="387.6" cy="52.2" r="0.9"/><circle cx="387.6" cy="55.8" r="0.9"/><circle cx="387.6" cy="59.4" r="0.9"/>
 </g>
 <path d="M408.3 51.2 v2 M408 55 h1 l-1 1.6 h1.2 M408 58.6 h1.2 l-0.6 0.8 a0.7 0.7 0 1 1 -0.6 1" stroke="#5b93e0" stroke-width="0.7"/>
 <path d="M399.0 54.8 l1.6 1.8 l1.6 -1.8 z M419.7 54.8 l1.6 1.8 l1.6 -1.8 z M477.0 54.8 l1.6 1.8 l1.6 -1.8 z M501.2 54.8 l1.6 1.8 l1.6 -1.8 z" fill="#a0a0a0" stroke="none"/>
 <!-- indent -->
 <g stroke="#c0c0c0" stroke-width="0.8">
  <path d="M432 51.5 h9 M436 55.8 h5 M436 59.8 h5 M432 62 h9"/>
  <path d="M447 51.5 h9 M451 55.8 h5 M451 59.8 h5 M447 62 h9"/>
 </g>
 <path d="M435 57.8 l-2.5 -1.5 v3 z M447.5 56.3 l2.5 1.5 l-2.5 1.5 z" fill="#5b93e0" stroke="none"/>
 <path d="M432 57.8 h2 M447.5 57.8 h2" stroke="#5b93e0" stroke-width="0.8"/>
 <!-- chinese layout -->
 <path d="M465 61.5 l4.5 -7.5 l4.5 7.5 M466.5 59 h6" stroke="#c8c8c8" stroke-width="0.8"/>
 <path d="M464.5 52 h3 M471.5 52 h3 M465.5 51 l-1 1 l1 1 M473.5 51 l1 1 l-1 1" stroke="#5b93e0" stroke-width="0.8"/>
 <!-- line break -->
 <path d="M490 53 h3 M496 51.5 v3.5 h-6.5 M492 53.5 l-2 1.5 l2 1.5 M490 59.5 h9 M497.5 58 l1.7 1.5 l-1.7 1.5" stroke="#c0c0c0" stroke-width="0.8"/>
 <!-- tab/table -->
 <path d="M508.8 54 v-2 h10.4 v2 M508.8 52 h10.4" stroke="#c0c0c0" stroke-width="0.8"/>
 <path d="M510.5 55 l-0.8 1.8 M513 55 l0 1.8 M515.5 55 l0.3 1.8 M518 55 l0.8 1.8" stroke="#5b93e0" stroke-width="0.8"/>
 <!-- align row -->
 <rect x="429.3" y="64" width="13.3" height="13.6" rx="2" fill="#383838" stroke="none"/>
 <g stroke="#c0c0c0" stroke-width="0.8">
  <path d="M387 67.5 h8.5 M387 70 h5.5 M387 72.5 h8.5 M387 75 h5.5"/>
  <path d="M402 67.5 h8.5 M403.5 70 h5.5 M402 72.5 h8.5 M403.5 75 h5.5"/>
  <path d="M417 67.5 h8.5 M420 70 h5.5 M417 72.5 h8.5 M420 75 h5.5"/>
  <path d="M431.5 67.5 h8.5 M431.5 70 h8.5 M431.5 72.5 h8.5 M431.5 75 h8.5"/>
  <path d="M445.5 69.5 h10 M445.5 76 h10 M446 69.5 v6.5 M455 69.5 v6.5"/>
 </g>
 <path d="M446.5 67.5 h2.5 M452 67.5 h2.5 M447 66.5 l-1 1 l1 1 M454 66.5 l1 1 l-1 1" stroke="#5b93e0" stroke-width="0.7"/>
 <!-- line spacing -->
 <path d="M467.5 67.5 h6 M467.5 70.5 h6 M467.5 73.5 h6 M467.5 76 h6" stroke="#c0c0c0" stroke-width="0.8"/>
 <path d="M464.5 67 v9.5 M463.2 68.5 l1.3 -1.5 l1.3 1.5 M463.2 75 l1.3 1.5 l1.3 -1.5" stroke="#5b93e0" stroke-width="0.8"/>
 <path d="M476.7 69.8 l1.6 1.8 l1.6 -1.8 z M501.2 69.8 l1.6 1.8 l1.6 -1.8 z M521.7 69.8 l1.6 1.8 l1.6 -1.8 z" fill="#a0a0a0" stroke="none"/>
 <!-- shading -->
 <path d="M489.5 73 l3.5 -5 l4.5 3 l-3 4 z" stroke="#c0c0c0" stroke-width="0.8"/>
 <rect x="488.5" y="75" width="9.5" height="2" fill="#e8e8e8" stroke="none"/>
 <path d="M491 77 l3 -2" stroke="#d94a44" stroke-width="0.8"/>
 <!-- borders -->
 <rect x="508.8" y="67" width="9.5" height="9.5" stroke="#c0c0c0" stroke-width="0.8"/>
 <path d="M513.5 67 v9.5 M508.8 71.8 h9.5" stroke="#c8c8c8" stroke-width="0.6"/>
 <path d="M524 80.5 h2.2 v-2.2" stroke="#666" stroke-width="0.6"/>
 <line x1="529" y1="49.3" x2="529" y2="77.6" stroke="#3a3a3a" stroke-width="0.8"/>
 <!-- gallery scroll arrows -->
 <path d="M687 54 l1.3 -1.3 l1.3 1.3 z M686.7 61.8 l1.6 1.8 l1.6 -1.8 z M686.7 72.8 l1.6 1.8 l1.6 -1.8 z M686.8 71 h3" fill="#a0a0a0" stroke="none"/>
 <path d="M686.8 71.3 h3" stroke="#999" stroke-width="0.6"/>
 <!-- new style -->
 <path d="M707 64 l4 -11 l3.5 9" stroke="#c0c0c0" stroke-width="0.8"/>
 <path d="M712.3 64.5 l5.8 -6.5 l1.5 1.4 l-5.8 6.5 l-2 0.4 z" stroke="#5b93e0" stroke-width="1"/>
 <path d="M723.2 71.8 l1.6 1.8 l1.6 -1.8 z M772.0 71.8 l1.6 1.8 l1.6 -1.8 z M819.2 71.8 l1.6 1.8 l1.6 -1.8 z M848.0 71.8 l1.6 1.8 l1.6 -1.8 z" fill="#a0a0a0" stroke="none"/>
 <path d="M727.8 80.5 h2.2 v-2.2" stroke="#666" stroke-width="0.6"/>
 <line x1="734" y1="49.3" x2="734" y2="77.6" stroke="#3a3a3a" stroke-width="0.8"/>
 <!-- wrench -->
 <path d="M752 53.5 a3 3 0 0 0 4 4 l6.5 6.5 a1.2 1.2 0 0 0 1.7 -1.7 l-6.5 -6.5 a3 3 0 0 0 -4 -4 l2 2 l-1.7 1.7 z" stroke="#c0c0c0" stroke-width="0.8"/>
 <line x1="781.7" y1="49.3" x2="781.7" y2="77.6" stroke="#3a3a3a" stroke-width="0.8"/>
 <!-- search -->
 <circle cx="804" cy="57" r="4.9" stroke="#5b93e0" stroke-width="1" fill="#262a30"/>
 <path d="M807.8 60.8 l4.5 4.5" stroke="#c8c8c8" stroke-width="1"/>
 <!-- select -->
 <path d="M835 64 v-11.5 h12.5 v6" stroke="#c0c0c0" stroke-width="0.8"/>
 <path d="M835 55 h12.5" stroke="#c8c8c8" stroke-width="0.6"/>
 <path d="M841.5 58 v8.5 l2.2 -2.3 l4.5 0 z" stroke="#5b93e0" stroke-width="0.9"/>
 <line x1="857" y1="49.3" x2="857" y2="77.6" stroke="#3a3a3a" stroke-width="0.8"/>

 <!-- status bar -->
 <circle cx="316.8" cy="463" r="3.3" fill="#2f8f48" stroke="none"/>
 <circle cx="316.8" cy="463" r="1.1" fill="#d8f0dc" stroke="none"/>
 <path d="M369 458.5 l3.8 1.4 v3 c0 2 -1.6 3.4 -3.8 4.2 c-2.2 -0.8 -3.8 -2.2 -3.8 -4.2 v-3 z M367.6 461.5 l2.8 2.8 M370.4 461.5 l-2.8 2.8" stroke="#999" stroke-width="0.7"/>
 <circle cx="423" cy="463" r="3.3" fill="#2f8f48" stroke="none"/>
 <circle cx="423" cy="463" r="1.1" fill="#d8f0dc" stroke="none"/>
 <g stroke="#a8a8a8" stroke-width="0.9">
  <path d="M678 458.5 l2.5 2.5 M678 458.5 h1.8 M678 458.5 v1.8 M686.5 458.5 l-2.5 2.5 M686.5 458.5 h-1.8 M686.5 458.5 v1.8 M678 466 l2.5 -2.5 M678 466 h1.8 M678 466 v-1.8 M686.5 466 l-2.5 -2.5 M686.5 466 h-1.8 M686.5 466 v-1.8"/>
  <path d="M696.2 457.5 h6 l2.5 2.5 v7 h-8.5 z M698 462 h5"/>
  <path d="M717 458.5 h5 M717 462 h5 M717 465.5 h5 M714.3 458.5 h1 M714.3 462 h1 M714.3 465.5 h1"/>
  <circle cx="735.2" cy="462" r="4.3"/>
  <path d="M731 461 h8.5 M732 463.5 h6.5 M735.2 457.7 v8.6 M733 458.5 v7 M737.4 458.5 v7"/>
  <path d="M746.5 462 c2.5 -4 7 -4 9.5 0 c-2.5 4 -7 4 -9.5 0 z M749 458 l-0.8 -1 M751.2 457.3 v-1.2 M753.5 458 l0.8 -1"/>
  <circle cx="751.2" cy="462" r="1.8"/>
  <path d="M764.5 462 h6.5 M856 462 h7 M859.5 458.5 v7"/>
  <path d="M915 459.5 v-1.5 h1.5 M920.5 458 h1.5 v1.5 M922 464.5 v1.5 h-1.5 M916.5 466 h-1.5 v-1.5"/>
 </g>
 <path d="M776 462 h75" stroke="#8a8a8a" stroke-width="1"/>
 <path d="M776 462 h41" stroke="#aaaaaa" stroke-width="1"/>
 <circle cx="817" cy="461.5" r="4.1" fill="#9a9a9a" stroke="none"/>
 <circle cx="918.5" cy="462" r="0.8" fill="#a0a0a0" stroke="none"/>
 <path d="M928.6 447.8 l1.6 1.6 l1.6 -1.6 z" fill="#555" stroke="none"/>
</g>
</svg>


<!-- video tile -->
<div class="a" style="left:863px;top:14px;width:91px;height:90px;background:linear-gradient(100deg,#404240,#4a4b49)"></div>
<svg width="1018" height="470" viewBox="0 0 1018 470">
 <defs><clipPath id="cc"><circle cx="908.7" cy="58.5" r="28.2"/></clipPath></defs>
 <g clip-path="url(#cc)">
  <rect x="880" y="30" width="58" height="58" fill="#d2d3cf"/>
  <path d="M880 48 L885.5 51 L885.5 71 L880 73 Z" fill="#62504c"/>
  <path d="M938 49 L931 52 L931 75 L938 76 Z" fill="#5e4c4a"/>
  <rect x="929.5" y="57.5" width="8" height="4.2" fill="#141414"/>
  <path d="M880 30 H938 V56 L935 50 L933 57 L930 47 L927 52 L925 43 L922 50 L920 42 L917 48 L914 40 L911 47 L908 39 L905 46 L902 40 L899 47 L896 41 L893 49 L891 43 L888 54 L886 47 L883 56 L880 50 Z" fill="#aec4c8"/>
  <path d="M887 40 l3 10 M892 37 l2 9 M897 35 l3 10 M903 34 l2 8 M909 34 l-1 9 M914 34 l1 8 M919 35 l2 10 M924 37 l2 9 M929 40 l3 10 M884 45 l1 6 M933 45 l1 7" stroke="#6f8a90" stroke-width="1" fill="none"/>
  <ellipse cx="900.4" cy="47" rx="4.4" ry="3.4" fill="none" stroke="#7a7a7a" stroke-width="0.55"/>
  <ellipse cx="918.1" cy="47.8" rx="4.4" ry="3.4" fill="none" stroke="#7a7a7a" stroke-width="0.55"/>
  <path d="M898 46 h2.5 M918 48 h2.5" stroke="#444" stroke-width="0.7"/>
  <ellipse cx="909" cy="55" rx="8.6" ry="5.2" fill="#d3ae3e" stroke="#7a6535" stroke-width="0.5"/>
  <path d="M901.5 55.2 q7.5 -1 15 0" stroke="#8a7030" stroke-width="0.5" fill="none"/>
 </g>
 <rect x="863" y="74.9" width="53" height="29.1" fill="rgba(0,0,0,0.55)"/>
 <rect x="872.5" y="81.8" width="7" height="11" rx="3.5" fill="#fafafa"/>
 <path d="M869.5 89.5 a6.5 6.5 0 0 0 13 0 M876 96 v1.8" stroke="#fafafa" stroke-width="1.5" fill="none"/>
</svg>
<div class="tx" style="left:888.5px;top:83px;font-size:10.8px;line-height:13px;color:#ececec">陈实</div>

<!-- overlays -->
<svg width="1018" height="470" viewBox="0 0 1018 470">
 <g fill="#a7a7a7">
  <circle cx="458.5" cy="443" r="4.4"/><circle cx="478.9" cy="443" r="4.4"/><circle cx="498.8" cy="443" r="4.4"/>
  <circle cx="519" cy="443" r="4.4"/><circle cx="539.4" cy="443" r="4.4"/><circle cx="558.9" cy="442.8" r="3.3"/>
  <circle cx="578.9" cy="442.6" r="1.9"/>
 </g>
 <path d="M496.6 302.8 L497.3 309 L498.8 307.6 L500.2 310.6 L501.4 310 L500 307.1 L502.2 306.8 Z" fill="#111" stroke="#fff" stroke-width="0.4"/>
</svg>
<div class="a" style="left:378.5px;top:454.8px;width:260px;height:6.4px;background:#fff;border-radius:3.2px"></div>
</body>
</html>
